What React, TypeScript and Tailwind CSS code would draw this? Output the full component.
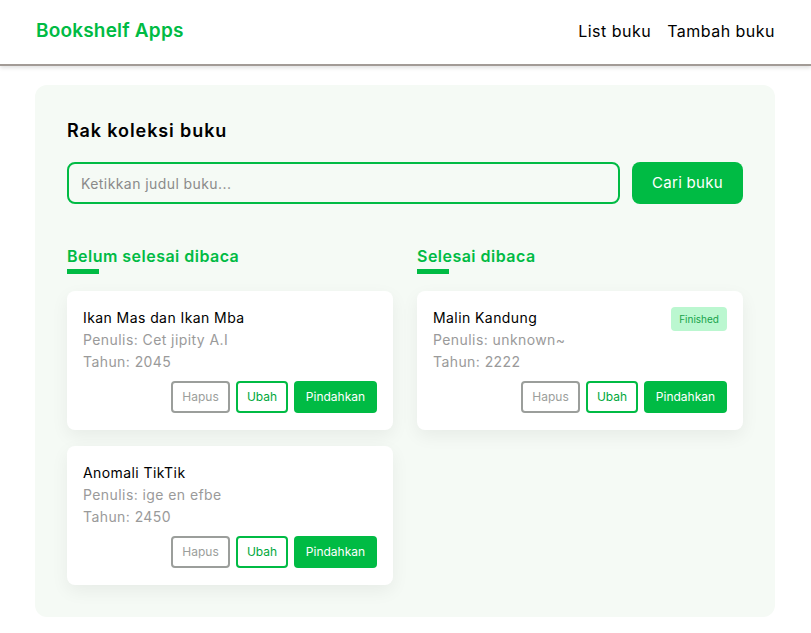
const unread = [
  { title: 'Ikan Mas dan Ikan Mba', author: 'Cet jipity A.I', year: 2045 },
  { title: 'Anomali TikTik', author: 'ige en efbe', year: 2450 },
];

const finished = [{ title: 'Malin Kandung', author: 'unknown~', year: 2222 }];

type Book = { title: string; author: string; year: number };

function BookCard({ book, done }: { book: Book; done?: boolean }) {
  return (
    <div className="bg-white rounded-lg px-4 pt-4 pb-[17px] shadow-[0_6px_18px_rgba(0,0,0,0.06)]">
      <div className="flex items-start justify-between">
        <div className="text-[14px] leading-[22px] tracking-[0.03em]">
          <h3 className="text-black">{book.title}</h3>
          <p className="text-[#9a9a9a]">Penulis: {book.author}</p>
          <p className="text-[#9a9a9a]">Tahun: {book.year}</p>
        </div>
        {done && (
          <span className="bg-[#bbf7d0] text-[#16a34a] text-[10px] leading-[24px] px-2 rounded">Finished</span>
        )}
      </div>
      <div className="flex justify-end gap-[6px] mt-2 text-[12px]">
        <button className="h-8 w-[59px] border-2 border-[#9b9e9b] rounded text-[#9b9e9b]">Hapus</button>
        <button className="h-8 w-[52px] border-2 border-[#00bb44] rounded text-[#00a83c]">Ubah</button>
        <button className="h-8 w-[83px] bg-[#00bb44] rounded text-white">Pindahkan</button>
      </div>
    </div>
  );
}

function Column({ title, books, done }: { title: string; books: Book[]; done?: boolean }) {
  return (
    <div>
      <h2 className="text-[16px] font-semibold text-[#00bb44] leading-6 tracking-[0.03em]">{title}</h2>
      <div className="w-8 h-[5px] bg-[#00bb44] mt-px" />
      <div className="flex flex-col gap-4 mt-[17px]">
        {books.map((b) => (
          <BookCard key={b.title} book={b} done={done} />
        ))}
      </div>
    </div>
  );
}

export default function App() {
  return (
    <div className="min-h-[633px] bg-white font-['Inter',sans-serif]">
      <header className="h-[66px] flex items-center justify-between pl-9 pr-9 pb-[2px] bg-white border-b-2 border-[#a29b96] shadow-[0_2px_4px_rgba(0,0,0,0.12)]">
        <h1 className="text-[19px] font-semibold text-[#00bb44] tracking-[0.01em]">Bookshelf Apps</h1>
        <nav className="flex gap-4 text-[16px] text-black tracking-[0.03em]">
          <a>List buku</a>
          <a>Tambah buku</a>
        </nav>
      </header>

      <main className="pl-[35px] pr-[36px] pt-[19px]">
        <section className="bg-[#f5faf5] rounded-xl px-8 pt-[34px] pb-8">
          <h2 className="text-[18px] font-semibold text-black leading-6 tracking-[0.05em]">Rak koleksi buku</h2>
          <div className="flex gap-3 mt-[19px]">
            <input
              className="flex-1 h-[42px] border-2 border-[#00bb44] rounded-lg px-3 text-[14px] tracking-[0.03em] bg-[#f5faf5] placeholder:text-[#8a8a8a] outline-none"
              placeholder="Ketikkan judul buku..."
            />
            <button className="w-[111px] h-[42px] bg-[#00bb44] rounded-lg text-white text-[15px] tracking-[0.02em]">Cari buku</button>
          </div>
          <div className="grid grid-cols-2 gap-6 mt-10">
            <Column title="Belum selesai dibaca" books={unread} />
            <Column title="Selesai dibaca" books={finished} done />
          </div>
        </section>
      </main>
    </div>
  );
}
